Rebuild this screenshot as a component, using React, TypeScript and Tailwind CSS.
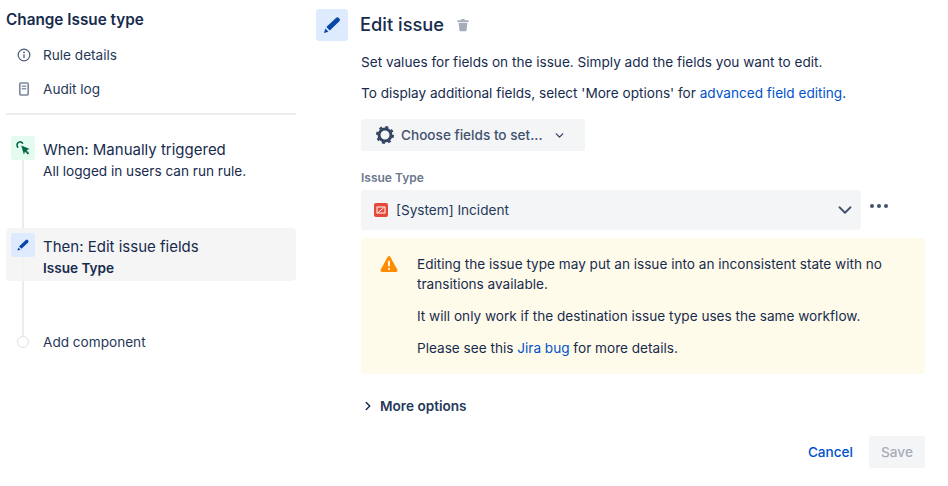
import { ChevronDown, ChevronRight } from 'lucide-react';

function PencilIcon({ className }: { className: string }) {
  return (
    <svg viewBox="0 0 24 24" className={className} fill="currentColor">
      <path d="M16.8 3.6a2.4 2.4 0 0 1 3.4 0l.6.6a2.4 2.4 0 0 1 0 3.4L9.4 18.6 5.2 14.4 16.8 3.6z" />
      <path d="M4 16.2 7.8 20 2.4 21.6 4 16.2z" />
    </svg>
  );
}

function CursorIcon() {
  return (
    <svg viewBox="0 0 16 16" className="h-4 w-4 text-[#006644]" fill="none">
      <path d="M6.2 5.4 14.6 9l-3.1 1.2 2.7 3-1.4 1.3-2.7-3-1.2 3.1z" fill="currentColor" />
      <path d="M7.6 3.2A3.1 3.1 0 0 0 2 5.2c0 .8.3 1.4.8 2" stroke="currentColor" strokeWidth="1.5" strokeLinecap="round" />
    </svg>
  );
}

function Sidebar() {
  return (
    <div className="w-[290px] shrink-0">
      <h2 className="pt-[10px] text-[15.3px] leading-[20px] font-semibold text-[#172b4d]">Change Issue type</h2>
      <div className="mt-[8px] flex h-[34px] items-center gap-[12px] pl-[11px] text-[13.6px] text-[#253858]">
        <svg viewBox="0 0 16 16" className="h-[14px] w-[14px] text-[#505f79]" fill="none">
          <circle cx="8" cy="8" r="6.6" stroke="currentColor" strokeWidth="1.4" />
          <rect x="7.2" y="7" width="1.6" height="4.4" rx="0.6" fill="currentColor" />
          <circle cx="8" cy="5" r="1" fill="currentColor" />
        </svg>
        <span>Rule details</span>
      </div>
      <div className="flex h-[34px] items-center gap-[12px] pl-[11px] text-[13.6px] text-[#253858]">
        <svg viewBox="0 0 14 16" className="h-[14px] w-[14px] text-[#7a869a]" fill="none">
          <rect x="2.2" y="1.2" width="9.6" height="13.6" rx="1" stroke="currentColor" strokeWidth="1.8" />
          <rect x="4.4" y="4" width="5.2" height="1.5" fill="currentColor" />
          <rect x="4.4" y="7" width="5.2" height="1.5" fill="currentColor" />
        </svg>
        <span>Audit log</span>
      </div>
      <div className="mt-[7px] h-[2px] bg-[#ebecf0]" />

      <div className="relative mt-[21px]">
        <div className="absolute top-[20px] left-[16px] h-[180px] w-[2px] bg-[#ebecf0]" />
        <div className="relative flex h-[92px] gap-[8px] pl-[5px]">
          <div className="flex h-[24px] w-[24px] items-center justify-center rounded-[3px] bg-[#e3fcef]">
            <CursorIcon />
          </div>
          <div className="pt-[2px]">
            <div className="text-[15px] leading-[23px] text-[#172b4d]">When: Manually triggered</div>
            <div className="text-[13.6px] leading-[20px] text-[#172b4d]">All logged in users can run rule.</div>
          </div>
        </div>
        <div className="relative flex h-[53px] gap-[8px] rounded-[4px] bg-[#f4f4f5]/90 pt-[5px] pl-[5px]">
          <div className="flex h-[24px] w-[24px] items-center justify-center rounded-[3px] bg-[#deebff]">
            <PencilIcon className="h-[14px] w-[14px] text-[#0747a6]" />
          </div>
          <div className="pt-[2px]">
            <div className="text-[15px] leading-[23px] text-[#172b4d]">Then: Edit issue fields</div>
            <div className="text-[13.6px] leading-[20px] font-semibold text-[#172b4d]">Issue Type</div>
          </div>
        </div>
        <div className="relative mt-[51px] flex h-[20px] items-center gap-[14px] pl-[11px]">
          <div className="h-[12px] w-[12px] rounded-full border border-[#dfe1e6] bg-white" />
          <span className="text-[13.6px] text-[#253858]">Add component</span>
        </div>
      </div>
    </div>
  );
}

function Warning() {
  return (
    <div className="mt-[8px] flex w-[564px] gap-[19px] rounded-[4px] bg-[#fffae6]/80 py-[16px] pr-[16px] pl-[19px] text-[13.6px] leading-[20px] text-[#172b4d]">
      <svg viewBox="0 0 18 18" className="mt-[1px] h-[18px] w-[18px] shrink-0">
        <path d="M7.7 1.8a1.5 1.5 0 0 1 2.6 0l7 13a1.5 1.5 0 0 1-1.3 2.2H2a1.5 1.5 0 0 1-1.3-2.2z" fill="#ff8b00" />
        <rect x="8" y="5.5" width="2" height="6" rx="0.8" fill="#fffae6" />
        <circle cx="9" cy="14" r="1.1" fill="#fffae6" />
      </svg>
      <div>
        <p>Editing the issue type may put an issue into an inconsistent state with no transitions available.</p>
        <p className="mt-[12px]">It will only work if the destination issue type uses the same workflow.</p>
        <p className="mt-[12px]">
          Please see this <a className="text-[#0052cc]">Jira bug</a> for more details.
        </p>
      </div>
    </div>
  );
}

function EditPanel() {
  return (
    <div className="ml-[20px] w-[609px] pt-[9px]">
      <div className="flex items-center">
        <div className="flex h-[32px] w-[32px] items-center justify-center rounded-[3px] bg-[#deebff]">
          <PencilIcon className="h-[20px] w-[20px] text-[#0747a6]" />
        </div>
        <h1 className="ml-[12px] pb-[1px] text-[18.3px] leading-[31px] font-medium text-[#172b4d]">Edit issue</h1>
        <svg viewBox="0 0 16 16" className="ml-[12px] h-[14px] w-[14px] text-[#a5adba]" fill="currentColor">
          <rect x="1.5" y="2.5" width="13" height="2" rx="0.6" />
          <rect x="6" y="1" width="4" height="2" rx="0.5" />
          <path d="M3 5.5h10l-.9 8.4a1.2 1.2 0 0 1-1.2 1.1H5.1a1.2 1.2 0 0 1-1.2-1.1z" />
        </svg>
      </div>
      <div className="pl-[45px]">
        <p className="mt-[11px] text-[13.6px] leading-[20px] text-[#172b4d]">
          Set values for fields on the issue. Simply add the fields you want to edit.
        </p>
        <p className="mt-[11px] text-[13.6px] leading-[20px] text-[#172b4d]">
          To display additional fields, select 'More options' for{' '}
          <a className="text-[#0052cc]">advanced field editing</a>.
        </p>
        <button className="mt-[16px] flex h-[32px] w-[224px] items-center rounded-[3px] bg-[#f4f5f7] pl-[14px] text-[13.6px] font-medium text-[#42526e]">
          <svg viewBox="0 0 20 20" className="h-[20px] w-[20px] text-[#344563]" fill="none">
            <circle cx="10" cy="10" r="6" stroke="currentColor" strokeWidth="3" />
            <circle cx="10" cy="10" r="8" stroke="currentColor" strokeWidth="2" strokeDasharray="3 3.3" />
          </svg>
          <span className="ml-[6px]">Choose fields to set...</span>
          <ChevronDown className="ml-[10px] h-[13px] w-[13px] text-[#344563]" strokeWidth={2.5} />
        </button>
        <div className="mt-[19px] text-[12px] leading-[16px] font-semibold text-[#6b778c]">Issue Type</div>
        <div className="mt-[4px] flex items-start">
          <div className="flex h-[40px] w-[500px] items-center rounded-[3px] bg-[#f4f5f7] pr-[5px] pl-[13px] text-[13.6px] text-[#253858]">
            <span className="flex h-[14px] w-[14px] items-center justify-center rounded-[2px] bg-[#e5493a]">
              <svg viewBox="0 0 10 10" className="h-[10px] w-[10px]" fill="none">
                <rect x="1" y="2" width="8" height="6" stroke="#fff" strokeWidth="1" />
                <path d="M2.5 7 7.5 3" stroke="#fff" strokeWidth="1" />
              </svg>
            </span>
            <span className="ml-[8px]">[System] Incident</span>
            <ChevronDown className="ml-auto h-[22px] w-[22px] text-[#42526e]" strokeWidth={2} />
          </div>
          <svg viewBox="0 0 18 4" className="mt-[14px] ml-[9px] h-[4px] w-[18px] text-[#42526e]" fill="currentColor">
            <circle cx="2" cy="2" r="2" />
            <circle cx="9" cy="2" r="2" />
            <circle cx="16" cy="2" r="2" />
          </svg>
        </div>
        <Warning />
        <div className="mt-[22px] flex items-center text-[13.6px] font-semibold text-[#253858]">
          <ChevronRight className="h-[14px] w-[14px] text-[#172b4d]" strokeWidth={2.5} />
          <span className="ml-[5px]">More options</span>
        </div>
        <div className="mt-[20px] flex w-[564px] items-center justify-end gap-[16px] text-[13.6px] font-medium">
          <button className="text-[#0052cc]">Cancel</button>
          <button className="h-[32px] w-[56px] rounded-[3px] bg-[#f4f5f7] text-[#a5adba]">Save</button>
        </div>
      </div>
    </div>
  );
}

export default function App() {
  return (
    <div className="flex h-[486px] w-[948px] overflow-hidden bg-white pl-[6px] font-['Inter',sans-serif]">
      <Sidebar />
      <EditPanel />
    </div>
  );
}
